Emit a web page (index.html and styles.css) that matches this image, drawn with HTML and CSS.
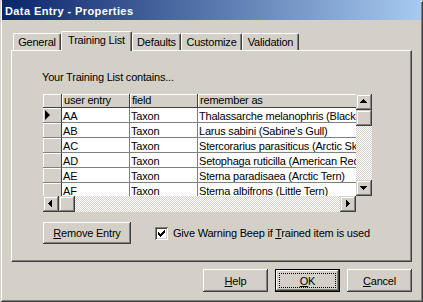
FILE: index.html
```html
<!DOCTYPE html>
<html>
<head>
<meta charset="utf-8">
<link rel="stylesheet" href="styles.css">
</head>
<body>
<div class="window">
  <div class="titlebar">Data Entry - Properties</div>
  <div class="client">
    <div class="tabs">
      <div class="tab w-general">General</div>
      <div class="tab selected w-training">Training List</div>
      <div class="tab w-defaults">Defaults</div>
      <div class="tab w-customize">Customize</div>
      <div class="tab w-validation">Validation</div>
    </div>
    <div class="panel">
      <div class="caption">Your Training List contains...</div>
      <div class="grid">
        <div class="cells">
          <div class="h hs"></div><div class="h">user entry</div><div class="h">field</div><div class="h last">remember as</div>

          <div class="s"><svg class="ptr" width="5" height="10" viewBox="0 0 5 10"><polygon points="0,0 5,5 0,10" fill="#000"/></svg></div><div class="d">AA</div><div class="d">Taxon</div><div class="d last">Thalassarche melanophris (Black-browed Albatross)</div>

          <div class="s"></div><div class="d">AB</div><div class="d">Taxon</div><div class="d last">Larus sabini (Sabine's Gull)</div>

          <div class="s"></div><div class="d">AC</div><div class="d">Taxon</div><div class="d last">Stercorarius parasiticus (Arctic Skua)</div>

          <div class="s"></div><div class="d">AD</div><div class="d">Taxon</div><div class="d last">Setophaga ruticilla (American Redstart)</div>

          <div class="s"></div><div class="d">AE</div><div class="d">Taxon</div><div class="d last">Sterna paradisaea (Arctic Tern)</div>

          <div class="s"></div><div class="d">AF</div><div class="d">Taxon</div><div class="d last">Sterna albifrons (Little Tern)</div>
        </div>
        <div class="vscroll">
          <div class="sb"><svg width="16" height="16" viewBox="0 0 16 16" shape-rendering="crispEdges"><rect x="7" y="5" width="1" height="1"/><rect x="6" y="6" width="3" height="1"/><rect x="5" y="7" width="5" height="1"/><rect x="4" y="8" width="7" height="1"/></svg></div>
          <div class="sb"></div>
          <div class="track"></div>
          <div class="sb"><svg width="16" height="16" viewBox="0 0 16 16" shape-rendering="crispEdges"><rect x="4" y="6" width="7" height="1"/><rect x="5" y="7" width="5" height="1"/><rect x="6" y="8" width="3" height="1"/><rect x="7" y="9" width="1" height="1"/></svg></div>
        </div>
        <div class="hscroll">
          <div class="sb"><svg width="16" height="16" viewBox="0 0 16 16" shape-rendering="crispEdges"><rect x="5" y="7" width="1" height="1"/><rect x="6" y="6" width="1" height="3"/><rect x="7" y="5" width="1" height="5"/><rect x="8" y="4" width="1" height="7"/></svg></div>
          <div class="sb"></div>
          <div class="track"></div>
          <div class="sb"><svg width="16" height="16" viewBox="0 0 16 16" shape-rendering="crispEdges"><rect x="6" y="4" width="1" height="7"/><rect x="7" y="5" width="1" height="5"/><rect x="8" y="6" width="1" height="3"/><rect x="9" y="7" width="1" height="1"/></svg></div>
        </div>
        <div class="corner"></div>
      </div>
      <div class="actions">
        <button class="btn remove"><u>R</u>emove Entry</button>
        <div class="check">
          <span class="box"><svg width="7" height="7" viewBox="0 0 7 7" shape-rendering="crispEdges"><rect x="0" y="2" width="1" height="3"/><rect x="1" y="3" width="1" height="3"/><rect x="2" y="4" width="1" height="3"/><rect x="3" y="3" width="1" height="3"/><rect x="4" y="2" width="1" height="3"/><rect x="5" y="1" width="1" height="3"/><rect x="6" y="0" width="1" height="3"/></svg></span>
          <span class="label">Give Warning Beep if <u>T</u>rained item is used</span>
        </div>
      </div>
    </div>
    <div class="footer">
      <button class="btn fbtn"><u>H</u>elp</button>
      <button class="btn fbtn default"><span class="focus"><u>O</u>K</span></button>
      <button class="btn fbtn"><u>C</u>ancel</button>
    </div>
  </div>
</div>
</body>
</html>
```
FILE: styles.css
```css
* { box-sizing: border-box; }
html, body { margin: 0; padding: 0; }
body {
  width: 423px;
  height: 302px;
  overflow: hidden;
  background: #d4d0c8;
  font-family: "Liberation Sans", Arial, sans-serif;
  font-size: 11px;
  letter-spacing: -0.2px;
  color: #000;
}
.window {
  width: 423px;
  height: 302px;
  padding: 0 2px 2px 2px;
  background: #d4d0c8;
  box-shadow: inset 1px 1px #d4d0c8, inset -1px -1px #404040, inset 2px 2px #fff, inset -2px -2px #808080;
  display: flex;
  flex-direction: column;
}
.titlebar {
  height: 20px;
  line-height: 18px;
  padding: 2px 0 0 3px;
  background: linear-gradient(to right, #0a246a, #a6caf0);
  color: #fff;
  font-weight: bold;
  letter-spacing: 0.4px;
  white-space: nowrap;
}
.client {
  padding: 11px 9px 8px 9px;
}
.tabs {
  display: flex;
  align-items: flex-start;
  height: 19px;
  padding-left: 2px;
}
.tab {
  height: 17px;
  margin-top: 2px;
  border-top: 1px solid #fff;
  border-left: 1px solid #fff;
  border-right: 1px solid #404040;
  box-shadow: inset -1px 0 #808080;
  border-radius: 2px 2px 0 0;
  background: #d4d0c8;
  text-align: center;
  padding-top: 2px;
  line-height: 13px;
  white-space: nowrap;
}
.tab.selected {
  height: 20px;
  margin-top: 0;
  margin-bottom: -1px;
  position: relative;
  z-index: 1;
}
.w-general { width: 48px; }
.w-training { width: 71px; }
.w-defaults { width: 49px; }
.w-customize { width: 61px; }
.w-validation { width: 57px; }

.panel {
  height: 212px;
  border: 1px solid;
  border-color: #fff #404040 #404040 #fff;
  box-shadow: inset -1px -1px #808080;
  padding: 20px 0 0 31px;
}
.caption {
  margin-left: -1px;
  height: 13px;
  line-height: 13px;
  white-space: nowrap;
}
.grid {
  margin-top: 10px;
  width: 329px;
  height: 118px;
  display: grid;
  grid-template-columns: 313px 16px;
  grid-template-rows: 102px 16px;
}
.cells {
  display: grid;
  grid-template-columns: 19px 68px 68px 158px;
  grid-template-rows: 14px;
  grid-auto-rows: 15px;
  overflow: hidden;
  background: #d4d0c8;
}
.cells > div {
  overflow: hidden;
  white-space: nowrap;
}
.h {
  background: #d4d0c8;
  border-right: 1px solid #404040;
  border-bottom: 1px solid #404040;
  box-shadow: inset 1px 1px #fff;
  line-height: 13px;
  padding-left: 2px;
}
.s {
  background: #d4d0c8;
  border-right: 1px solid #404040;
  border-bottom: 1px solid #808080;
  box-shadow: inset 1px 1px #fff;
  display: flex;
  align-items: center;
  padding-left: 2px;
}
.d {
  background: #fff;
  border-right: 1px solid #808080;
  border-bottom: 1px solid #808080;
  line-height: 14px;
  padding: 1px 0 0 1px;
}
.cells .last { border-right: none; }
.ptr { display: block; }

.vscroll {
  display: flex;
  flex-direction: column;
}
.hscroll {
  display: flex;
}
.sb {
  flex: 0 0 16px;
  width: 16px;
  height: 16px;
  background: #d4d0c8;
  box-shadow: inset -1px -1px #404040, inset 1px 1px #d4d0c8, inset -2px -2px #808080, inset 2px 2px #fff;
}
.sb svg { display: block; fill: #000; }
.track {
  flex: 1;
  background: repeating-conic-gradient(#fff 0% 25%, #d4d0c8 0% 50%) 0 0 / 2px 2px;
}
.corner { background: #d4d0c8; }

.actions {
  margin-top: 10px;
  display: flex;
  align-items: center;
}
.btn {
  font: inherit;
  letter-spacing: inherit;
  color: #000;
  background: #d4d0c8;
  border: none;
  padding: 0;
  margin: 0;
  box-shadow: inset -1px -1px #404040, inset 1px 1px #fff, inset -2px -2px #808080, inset 2px 2px #d4d0c8;
}
.btn u { text-underline-offset: 1px; }
.remove {
  width: 88px;
  height: 22px;
}
.check {
  display: flex;
  align-items: center;
  margin-left: 24px;
  white-space: nowrap;
}
.box {
  width: 13px;
  height: 13px;
  background: #fff;
  box-shadow: inset 1px 1px #808080, inset -1px -1px #fff, inset 2px 2px #404040, inset -2px -2px #d4d0c8;
  padding: 3px;
  display: block;
}
.box svg { display: block; fill: #000; }
.label { margin-left: 5px; }
.label u { text-underline-offset: 1px; }

.footer {
  margin-top: 7px;
  display: flex;
  justify-content: flex-end;
  gap: 7px;
}
.fbtn {
  width: 65px;
  height: 23px;
}
.default {
  display: flex;
  padding: 4px;
  box-shadow: inset 0 0 0 1px #000, inset -2px -2px #404040, inset 2px 2px #fff, inset -3px -3px #808080;
}
.focus {
  flex: 1;
  border: 1px dotted #000;
  display: flex;
  align-items: center;
  justify-content: center;
}
```
